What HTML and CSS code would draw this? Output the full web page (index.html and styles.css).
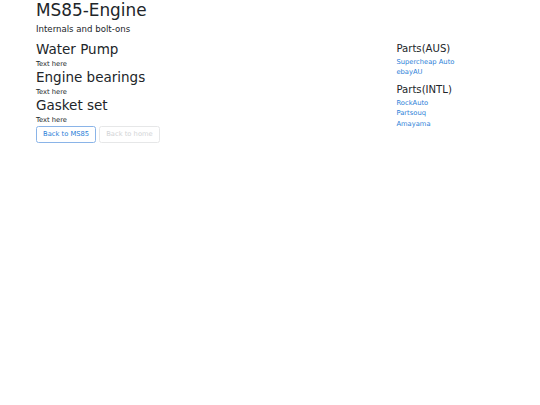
FILE: index.html
```html
<!DOCTYPE html>
<html lang="en">
  <head>
    <meta charset="UTF-8" />
    <meta name="viewport" content="width=device-width, initial-scale=1.0" />
    <title>MS85-Engine</title>
    <link rel="stylesheet" href="styles.css">
  </head>
  <body>
    <div class="container">
      <h1>MS85-Engine</h1>
      <p class="lead">Internals and bolt-ons</p>

      <div class="row">
        <div class="col-main">
          <h2>Water Pump</h2>
          <p class="note">Text here</p>
          <h2>Engine bearings</h2>
          <p class="note">Text here</p>
          <h2>Gasket set</h2>
          <p class="note">Text here</p>

          <div class="actions">
            <a href="#" class="btn btn-primary">Back to MS85</a>
            <a href="#" class="btn btn-disabled">Back to home</a>
          </div>
        </div>
        <div class="col-side">
          <h4>Parts(AUS)</h4>
          <ul class="links">
            <li><a href="#">Supercheap Auto</a></li>
            <li><a href="#">ebayAU</a></li>
          </ul>
          <h4>Parts(INTL)</h4>
          <ul class="links">
            <li><a href="#">RockAuto</a></li>
            <li><a href="#">Partsouq</a></li>
            <li><a href="#">Amayama</a></li>
          </ul>
        </div>
      </div>
    </div>
  </body>
</html>
```

FILE: styles.css
```css
body {
  margin: 0;
  background-color: #fff;
  color: #212529;
  font-family: "DejaVu Sans", sans-serif;
  font-size: 6.75px;
  line-height: 1.5;
}

.container {
  width: 481px;
  margin: 0 auto;
  padding: 0 6.5px;
  box-sizing: border-box;
}

.row {
  display: flex;
  margin: 0 -5px;
  padding-top: 5.4px;
}

.col-main {
  flex: 0 0 75.4%;
  padding: 0 5px;
  box-sizing: border-box;
}

.col-side {
  flex: 1;
  padding: 0 5px;
  box-sizing: border-box;
}

h1,
h2,
h4 {
  margin: 0;
  font-weight: 500;
  line-height: 1.2;
}

h1 {
  font-size: 16.875px;
  margin-bottom: 2.6px;
}

.lead {
  font-size: 8.6px;
  margin: 0;
}

h2 {
  font-size: 13.5px;
  margin-bottom: 1.2px;
}

.note {
  margin: 0 0 0.6px;
}

.actions {
  display: flex;
  gap: 3px;
  margin-top: 1.6px;
}

.btn {
  display: inline-block;
  padding: 2px 6px;
  font-size: 6.75px;
  line-height: 1.5;
  border: 1px solid;
  border-radius: 2.5px;
  text-decoration: none;
}

.btn-primary {
  color: #2c7fd8;
  border-color: #8ab4e8;
}

.btn-disabled {
  color: #d2d4d6;
  border-color: #e6e7e8;
}

h4 {
  font-size: 10.125px;
  margin-top: 2px;
}

.links {
  list-style: none;
  margin: 2px 0 6.7px;
  padding: 0;
}

.links a {
  color: #2c7fd8;
  text-decoration: none;
}
```
